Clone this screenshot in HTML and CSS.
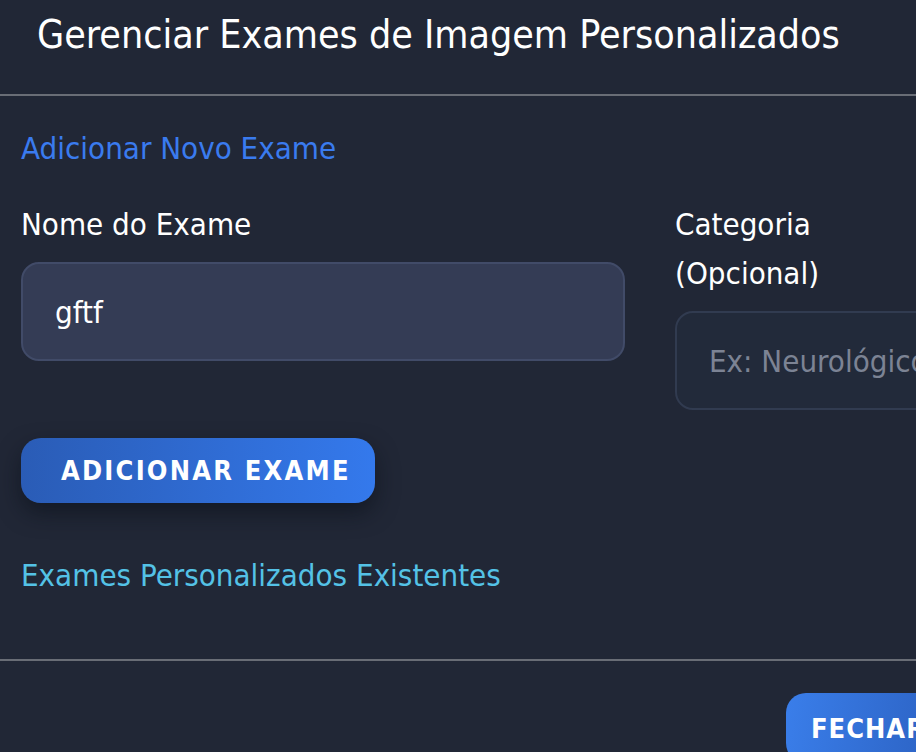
FILE: index.html
```html
<!DOCTYPE html>
<html lang="pt-BR">
<head>
<meta charset="utf-8">
<title>Gerenciar Exames de Imagem Personalizados</title>
<link rel="stylesheet" href="styles.css">
</head>
<body>
<div class="modal">
  <header class="modal-header">
    <h2 class="modal-title">Gerenciar Exames de Imagem Personalizados</h2>
  </header>
  <main class="modal-body">
    <h3 class="section-title">Adicionar Novo Exame</h3>
    <div class="form-row">
      <div class="field field-name">
        <label class="field-label" for="nome">Nome do Exame</label>
        <input class="field-input filled" id="nome" type="text" value="gftf">
      </div>
      <div class="field field-cat">
        <label class="field-label" for="cat">Categoria (Opcional)</label>
        <input class="field-input empty" id="cat" type="text" placeholder="Ex: Neurológico">
      </div>
    </div>
    <button class="btn btn-add" type="button">ADICIONAR EXAME</button>
    <h3 class="section-title existing">Exames Personalizados Existentes</h3>
  </main>
  <footer class="modal-footer">
    <button class="btn btn-close" type="button">FECHAR</button>
  </footer>
</div>
</body>
</html>
```
FILE: styles.css
```css
html, body {
  margin: 0;
  padding: 0;
  background: #212736;
  overflow: hidden;
  height: 752px;
}
body {
  font-family: "DejaVu Sans Condensed", "DejaVu Sans", sans-serif;
  color: #ffffff;
}
.modal {
  width: 1100px;
  background: #212736;
}
.modal-header {
  height: 94px;
  border-bottom: 2px solid #696d76;
  padding: 0 37px;
  box-sizing: content-box;
}
.modal-title {
  margin: 0;
  padding-top: 12px;
  font-size: 39px;
  font-weight: normal;
  line-height: 46px;
  color: #ffffff;
}
.modal-body {
  padding: 30px 21px 0;
  height: 565px;
  box-sizing: border-box;
  border-bottom: 2px solid #696d76;
}
.section-title {
  margin: 0;
  font-size: 31px;
  font-weight: normal;
  line-height: 44px;
  color: #3a7bef;
}
.section-title.existing {
  color: #54c2e6;
  font-size: 31px;
  margin-top: 50px;
}
.form-row {
  display: grid;
  grid-template-columns: 604px 260px;
  column-gap: 50px;
  margin-top: 30px;
}
.field {
  display: flex;
  flex-direction: column;
}
.field-label {
  font-size: 31px;
  line-height: 49px;
  margin-bottom: 13px;
}
.field-input {
  height: 99px;
  box-sizing: border-box;
  border-radius: 18px;
  padding: 0 32px;
  font-family: inherit;
  font-size: 31px;
  color: #ffffff;
  outline: none;
}
.field-input.filled {
  background: #343c55;
  border: 2px solid #414b68;
}
.field-input.empty {
  background: #222a3a;
  border: 2px solid #313b50;
  width: 300px;
}
.field-input::placeholder {
  color: #7c8394;
}
.btn {
  border: none;
  color: #ffffff;
  font-family: "DejaVu Sans Condensed", "DejaVu Sans", sans-serif;
  font-weight: bold;
  font-size: 27px;
  letter-spacing: 2.2px;
  border-radius: 20px;
  cursor: pointer;
}
.btn-add {
  margin-top: 28px;
  height: 65px;
  padding: 0 24px 0 40px;
  background: linear-gradient(90deg, #2a5cb6 0%, #3479ec 100%);
  box-shadow: 0 10px 22px rgba(10, 14, 24, 0.55);
  display: block;
}
.modal-footer {
  padding-top: 32px;
  display: flex;
  justify-content: flex-start;
  padding-left: 786px;
}
.btn-close {
  height: 70px;
  padding: 0 25px;
  letter-spacing: 1px;
  background: linear-gradient(100deg, #3a7eea 0%, #2b60c0 100%);
}
```
